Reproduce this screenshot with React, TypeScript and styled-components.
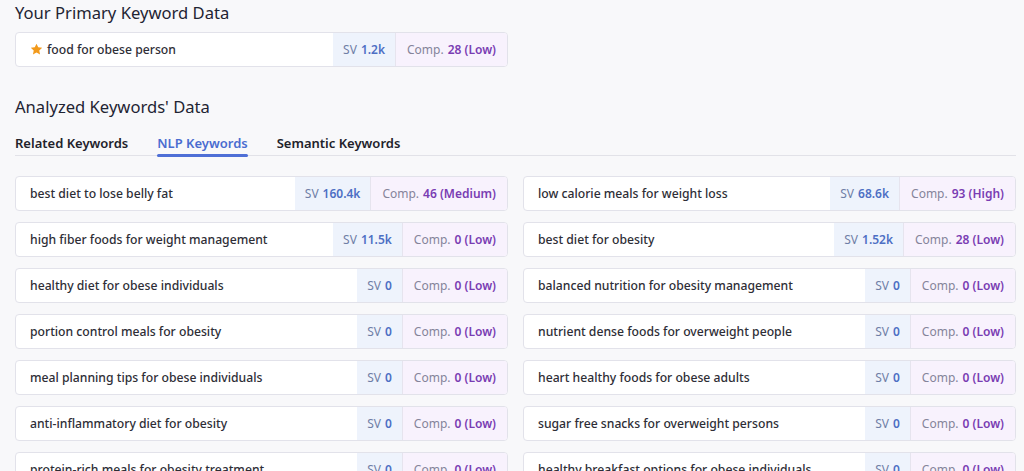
import React from "react";
import styled, { createGlobalStyle } from "styled-components";

const Global = createGlobalStyle`
  html, body { margin: 0; padding: 0; background: #f8f8fa; }
  body { font-family: "Noto Sans", "Open Sans", sans-serif; color: #2b2b33; }
  * { box-sizing: border-box; }
`;

const Page = styled.div`
  padding: 0 8px 0 15px;
  height: 471px;
  overflow: hidden;
`;

const Title = styled.h2<{ $top: number }>`
  margin: ${(p) => p.$top}px 0 0 0;
  font-size: 16.6px;
  font-weight: 400;
  line-height: 24px;
  color: #1f2433;
`;

const Card = styled.div<{ $w?: string }>`
  display: flex;
  align-items: stretch;
  height: 35px;
  width: ${(p) => p.$w || "auto"};
  background: #fff;
  border: 1px solid #e2e2ea;
  border-radius: 4px;
  overflow: hidden;
`;

const Name = styled.div`
  flex: 1;
  display: flex;
  align-items: center;
  gap: 4px;
  padding-left: 14px;
  font-size: 12.2px;
  font-weight: 500;
  color: #2e2e36;
  white-space: nowrap;
  overflow: hidden;
`;

const Cell = styled.div<{ $kind: "sv" | "comp" }>`
  display: flex;
  align-items: center;
  padding: 0 ${(p) => (p.$kind === "sv" ? 10 : 11)}px;
  font-size: 12px;
  white-space: nowrap;
  background: ${(p) => (p.$kind === "sv" ? "#eef3fc" : "#f8f2fd")};
  color: ${(p) => (p.$kind === "sv" ? "#6f7ea6" : "#85849a")};
  border-left: ${(p) => (p.$kind === "comp" ? "1px solid #e6e4ee" : "none")};
`;

const Val = styled.span<{ $kind: "sv" | "comp" }>`
  margin-left: 4px;
  font-weight: 600;
  color: ${(p) => (p.$kind === "sv" ? "#4d6fc4" : "#7a3db3")};
`;

const Tabs = styled.div`
  display: flex;
  gap: 29px;
  margin-top: 14px;
  border-bottom: 1px solid #e2e2e8;
  width: 1001px;
`;

const Tab = styled.div<{ $active?: boolean }>`
  font-size: 13px;
  font-weight: 600;
  line-height: 20px;
  padding-bottom: 2px;
  color: ${(p) => (p.$active ? "#4a6cd0" : "#22222a")};
  position: relative;
  &::after {
    content: "";
    display: ${(p) => (p.$active ? "block" : "none")};
    position: absolute;
    left: 0;
    right: 0;
    bottom: -2px;
    height: 3px;
    border-radius: 2px;
    background: #4f6fd6;
  }
`;

const Grid = styled.div`
  display: grid;
  grid-template-columns: 493px 493px;
  column-gap: 15px;
  row-gap: 11px;
  margin-top: 20px;
`;

const Spacer = styled.div`
  height: 7px;
`;

const Star = () => (
  <svg width="13" height="13" viewBox="0 0 24 24">
    <path
      d="M12 1.2l3.2 6.8 7.4.9-5.5 5.1 1.5 7.3L12 17.7l-6.6 3.6 1.5-7.3-5.5-5.1 7.4-.9z"
      fill="#f29a1c"
    />
  </svg>
);

type KW = { k: string; sv: string; c: string; l: string };

const rows: KW[] = [
  { k: "best diet to lose belly fat", sv: "160.4k", c: "46", l: "Medium" },
  { k: "low calorie meals for weight loss", sv: "68.6k", c: "93", l: "High" },
  { k: "high fiber foods for weight management", sv: "11.5k", c: "0", l: "Low" },
  { k: "best diet for obesity", sv: "1.52k", c: "28", l: "Low" },
  { k: "healthy diet for obese individuals", sv: "0", c: "0", l: "Low" },
  { k: "balanced nutrition for obesity management", sv: "0", c: "0", l: "Low" },
  { k: "portion control meals for obesity", sv: "0", c: "0", l: "Low" },
  { k: "nutrient dense foods for overweight people", sv: "0", c: "0", l: "Low" },
  { k: "meal planning tips for obese individuals", sv: "0", c: "0", l: "Low" },
  { k: "heart healthy foods for obese adults", sv: "0", c: "0", l: "Low" },
  { k: "anti-inflammatory diet for obesity", sv: "0", c: "0", l: "Low" },
  { k: "sugar free snacks for overweight persons", sv: "0", c: "0", l: "Low" },
  { k: "protein-rich meals for obesity treatment", sv: "0", c: "0", l: "Low" },
  { k: "healthy breakfast options for obese individuals", sv: "0", c: "0", l: "Low" },
];

const Row = ({ d, star, w }: { d: KW; star?: boolean; w?: string }) => (
  <Card $w={w}>
    <Name>
      {star && <Star />}
      {d.k}
    </Name>
    <Cell $kind="sv">
      SV<Val $kind="sv">{d.sv}</Val>
    </Cell>
    <Cell $kind="comp">
      Comp.<Val $kind="comp">{d.c} ({d.l})</Val>
    </Cell>
  </Card>
);

export default function App() {
  return (
    <>
      <Global />
      <Page>
        <Title $top={1}>Your Primary Keyword Data</Title>
        <Spacer />
        <Row d={{ k: "food for obese person", sv: "1.2k", c: "28", l: "Low" }} star w="493px" />
        <Title $top={28}>Analyzed Keywords' Data</Title>
        <Tabs>
          <Tab>Related Keywords</Tab>
          <Tab $active>NLP Keywords</Tab>
          <Tab>Semantic Keywords</Tab>
        </Tabs>
        <Grid>
          {rows.map((r) => (
            <Row key={r.k} d={r} />
          ))}
        </Grid>
      </Page>
    </>
  );
}
